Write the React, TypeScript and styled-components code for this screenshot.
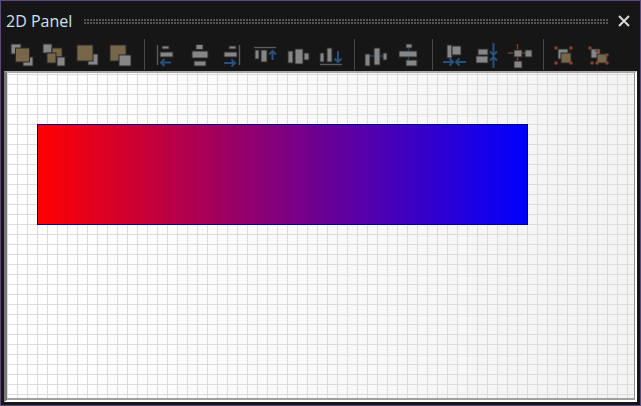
import styled, { createGlobalStyle } from "styled-components";

const GlobalStyle = createGlobalStyle`
  html, body {
    margin: 0;
    padding: 0;
    background: #161616;
  }
`;

const GRAY = "#868686";
const TAN = "#776748";
const BLUE = "#27507e";
const RED = "#83402f";
const EDGE = "#2a2a2a";

type Box = [number, number, number, number];

const Gray = ({ b }: { b: Box }) => (
  <rect x={b[0]} y={b[1]} width={b[2]} height={b[3]} fill={GRAY} stroke={EDGE} strokeWidth="1" />
);
const Tan = ({ b }: { b: Box }) => (
  <rect x={b[0]} y={b[1]} width={b[2]} height={b[3]} fill={TAN} stroke={EDGE} strokeWidth="1" />
);
const Bar = ({ x1, y1, x2, y2, color = "#5a5a5a" }: { x1: number; y1: number; x2: number; y2: number; color?: string }) => (
  <line x1={x1} y1={y1} x2={x2} y2={y2} stroke={color} strokeWidth="1.4" />
);
const Arrow = ({ d }: { d: string }) => (
  <path d={d} fill="none" stroke={BLUE} strokeWidth="2" />
);
const Dots = ({ pts }: { pts: [number, number][] }) => (
  <>
    {pts.map(([x, y]) => (
      <circle key={`${x}-${y}`} cx={x} cy={y} r="1.8" fill={RED} />
    ))}
  </>
);

const icons = {
  bringAll: (
    <>
      <Gray b={[2, 1, 10, 10]} />
      <Gray b={[14, 14, 10, 9]} />
      <Tan b={[6.5, 5, 14, 14]} />
    </>
  ),
  bringStep: (
    <>
      <Gray b={[1, 1, 9, 9]} />
      <Tan b={[10, 5, 10, 9]} />
      <Tan b={[5, 10, 9, 10]} />
      <Gray b={[15, 14, 8, 9]} />
    </>
  ),
  sendAll: (
    <>
      <Gray b={[13, 11, 10, 11]} />
      <Tan b={[2, 2, 16, 16]} />
    </>
  ),
  sendStep: (
    <>
      <Tan b={[2, 2, 16, 16]} />
      <Gray b={[11, 12, 12, 11]} />
    </>
  ),
  alignLeft: (
    <>
      <Bar x1={3.5} y1={2} x2={3.5} y2={22} />
      <Gray b={[8, 3, 7, 3]} />
      <Gray b={[6, 9, 13, 5]} />
      <Arrow d="M17 19.5H7M10.5 16L7 19.5L10.5 23" />
    </>
  ),
  alignCenter: (
    <>
      <Gray b={[9, 1.5, 7, 5]} />
      <Gray b={[5, 8, 16, 7]} />
      <Gray b={[7, 18, 12, 5]} />
    </>
  ),
  alignRight: (
    <>
      <Bar x1={19.5} y1={2} x2={19.5} y2={22} />
      <Gray b={[9, 3, 7, 3]} />
      <Gray b={[4, 9, 13, 5]} />
      <Arrow d="M4 20H15M11.5 16.5L15 20L11.5 23.5" />
    </>
  ),
  alignTop: (
    <>
      <Bar x1={1} y1={4.5} x2={23} y2={4.5} />
      <Gray b={[2, 7, 4, 9]} />
      <Gray b={[8, 7, 6, 12]} />
      <Arrow d="M19.5 17V8M16 11.5L19.5 8L23 11.5" />
    </>
  ),
  alignMiddle: (
    <>
      <Gray b={[2, 8, 5, 12]} />
      <Gray b={[9, 6, 8, 15]} />
      <Gray b={[18, 10, 5, 7]} />
    </>
  ),
  alignBottom: (
    <>
      <Bar x1={1} y1={21.5} x2={23} y2={21.5} />
      <Gray b={[1, 10, 4, 9]} />
      <Gray b={[8, 5, 5, 14]} />
      <Arrow d="M19 8V19M15.5 15.5L19 19L22.5 15.5" />
    </>
  ),
  spreadH: (
    <>
      <Bar x1={6} y1={13} x2={19} y2={13} color={BLUE} />
      <Gray b={[1, 11, 5, 12]} />
      <Gray b={[10, 5, 6, 17]} />
      <Gray b={[19, 10, 4, 7]} />
    </>
  ),
  spreadV: (
    <>
      <Bar x1={11.5} y1={5} x2={11.5} y2={17} color={BLUE} />
      <Gray b={[9, 1, 6, 4]} />
      <Gray b={[2, 8, 18, 6]} />
      <Gray b={[9, 17, 11, 6]} />
    </>
  ),
  packH: (
    <>
      <Gray b={[5, 2, 5, 13]} />
      <Gray b={[10, 3, 9, 9]} />
      <Arrow d="M1 19H11M7.5 15.5L11 19L7.5 22.5" />
      <Arrow d="M24 19H14M17.5 15.5L14 19L17.5 22.5" />
    </>
  ),
  packV: (
    <>
      <Gray b={[3, 6, 10, 6]} />
      <Gray b={[1, 13, 12, 7]} />
      <Arrow d="M18.5 0V12M15 8.5L18.5 12L22 8.5" />
      <Arrow d="M18.5 25V14M15 17.5L18.5 14L22 17.5" />
    </>
  ),
  pivot: (
    <>
      <Bar x1={9.5} y1={1} x2={9.5} y2={6} color={RED} />
      <Bar x1={0} y1={10} x2={5} y2={10} color={RED} />
      <Bar x1={13} y1={10} x2={17} y2={10} color={RED} />
      <Bar x1={9.5} y1={14} x2={9.5} y2={18} color={RED} />
      <Gray b={[6, 7, 8, 7]} />
      <Gray b={[17, 7, 7, 7]} />
      <Gray b={[6, 18, 8, 7]} />
    </>
  ),
  groupBack: (
    <>
      <Gray b={[5, 6, 10, 10]} />
      <Tan b={[8, 10, 10, 10]} />
      <Dots pts={[[3, 5], [18, 5], [3, 20], [18, 20]]} />
    </>
  ),
  groupFront: (
    <>
      <Gray b={[5, 6, 9, 9]} />
      <Tan b={[11, 11, 10, 9]} />
      <Dots pts={[[4, 5], [11, 8], [21, 12], [6, 20], [21, 20], [11, 20]]} />
    </>
  ),
};

type IconName = keyof typeof icons;

const groups: IconName[][] = [
  ["bringAll", "bringStep", "sendAll", "sendStep"],
  ["alignLeft", "alignCenter", "alignRight", "alignTop", "alignMiddle", "alignBottom"],
  ["spreadH", "spreadV"],
  ["packH", "packV", "pivot"],
  ["groupBack", "groupFront"],
];

const Window = styled.div`
  box-sizing: border-box;
  width: 641px;
  height: 406px;
  display: flex;
  flex-direction: column;
  background: #161616;
  border: 1px solid #5d4a80;
`;

const TitleBar = styled.div`
  height: 37px;
  flex: none;
  display: flex;
  align-items: center;
  padding: 3px 9px 0 5px;
  box-sizing: border-box;
`;

const Title = styled.span`
  font-family: "Open Sans", "Noto Sans", sans-serif;
  font-size: 16px;
  color: #cfe0f2;
  margin-right: 12px;
`;

const Grip = styled.div`
  flex: 1;
  height: 5px;
  margin-right: 8px;
  background-image: radial-gradient(circle at 1px 1px, #555555 0.8px, transparent 1px);
  background-size: 3px 3px;
`;

const Close = styled.span`
  width: 14px;
  height: 14px;
  display: flex;
  svg {
    display: block;
  }
`;

const Toolbar = styled.div`
  height: 33px;
  flex: none;
  display: flex;
  align-items: center;
  padding-left: 3px;
`;

const Group = styled.div`
  display: flex;
  align-items: center;
`;

const Divider = styled.div<{ $first: boolean }>`
  width: 1px;
  height: 31px;
  background: #484848;
  margin: 0 4px 0 ${(p) => (p.$first ? "8px" : "7px")};
`;

const ToolButton = styled.button`
  width: 33px;
  height: 33px;
  padding: 0;
  border: 0;
  background: transparent;
  display: flex;
  align-items: center;
  justify-content: center;
  svg {
    display: block;
    filter: blur(0.6px);
    overflow: visible;
  }
`;

const Frame = styled.div`
  flex: 1;
  margin: 0 3px 3px 3px;
  border-top: 2px solid #a8a8a8;
  border-left: 3px solid #777777;
  border-right: 2px solid #ffffff;
  border-bottom: 2px solid #ffffff;
  min-height: 0;
  display: flex;
`;

const Canvas = styled.div`
  flex: 1;
  box-sizing: border-box;
  padding: 51px 0 0 30px;
  border-right: 1px solid #8c8c8c;
  border-bottom: 2px solid #a0a0a0;
  background-color: #f4f4f4;
  background-image:
    linear-gradient(to right, #dcdcdc 1px, transparent 1px),
    linear-gradient(to bottom, #dcdcdc 1px, transparent 1px),
    linear-gradient(to right, #ffffff, #f3f3f3);
  background-size: 10px 10px, 10px 10px, 100% 100%;
  background-position: 0 1px, 0 1px, 0 0;
`;

const Shape = styled.div`
  box-sizing: border-box;
  width: 491px;
  height: 101px;
  border: 1px solid #00008b;
  background: linear-gradient(to right, #ff0000, #0000ff);
`;

const App = () => {
  return (
    <>
      <GlobalStyle />
      <Window>
        <TitleBar>
          <Title>2D Panel</Title>
          <Grip />
          <Close>
            <svg width="14" height="14" viewBox="0 0 14 14">
              <path d="M2 2L12 12M12 2L2 12" stroke="#d8d8d8" strokeWidth="2" />
            </svg>
          </Close>
        </TitleBar>
        <Toolbar>
          {groups.map((group, i) => (
            <Group key={group[0]}>
              {i > 0 && <Divider $first={i === 1} />}
              {group.map((name) => (
                <ToolButton key={name}>
                  <svg width="24" height="24" viewBox="0 0 24 24">
                    {icons[name]}
                  </svg>
                </ToolButton>
              ))}
            </Group>
          ))}
        </Toolbar>
        <Frame>
          <Canvas>
            <Shape />
          </Canvas>
        </Frame>
      </Window>
    </>
  );
};

export default App;
